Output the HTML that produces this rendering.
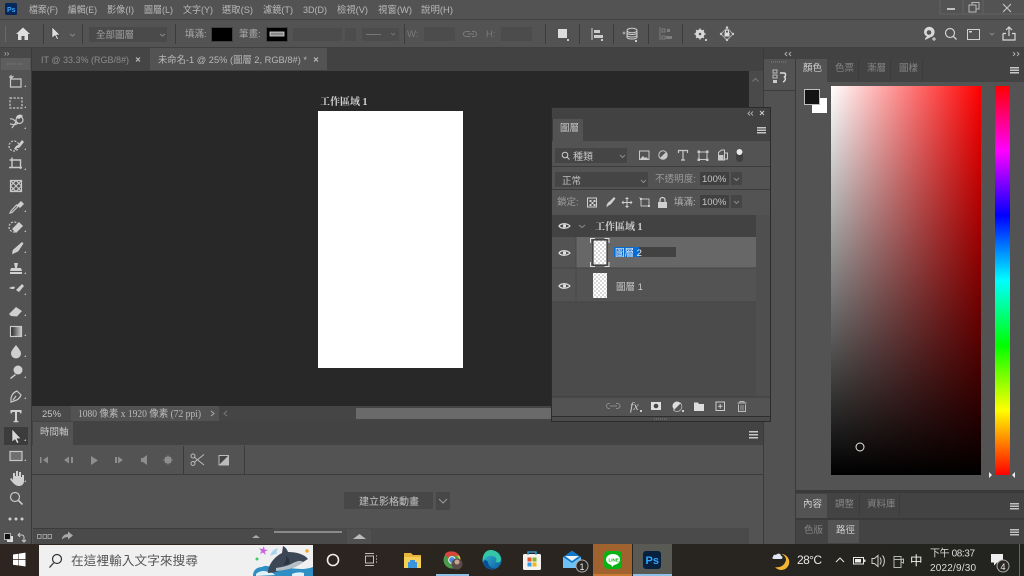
<!DOCTYPE html>
<html><head><meta charset="utf-8"><style>
html,body{margin:0;padding:0;background:#535353;width:1024px;height:576px;overflow:hidden}
svg{display:block;position:absolute;left:0;top:0;filter:blur(.35px)}
text{font-family:"Liberation Sans","Noto Sans CJK TC",sans-serif;font-size:9.5px;fill:#b8b8b8}
.d{fill:#868686}
.st{fill:none;stroke:#c8c8c8;stroke-width:1.2}
.sd{fill:none;stroke:#8a8a8a;stroke-width:1}
</style></head><body>
<svg width="1024" height="576" viewBox="0 0 1024 576" xmlns="http://www.w3.org/2000/svg">
<defs>
<linearGradient id="wr" x1="0" x2="1" y1="0" y2="0"><stop offset="0" stop-color="#fff"/><stop offset="1" stop-color="#f00"/></linearGradient>
<linearGradient id="tb" x1="0" x2="0" y1="0" y2="1"><stop offset="0" stop-color="#000" stop-opacity="0"/><stop offset="1" stop-color="#000"/></linearGradient>
<linearGradient id="hue" x1="0" x2="0" y1="0" y2="1"><stop offset="0" stop-color="#f00"/><stop offset=".1667" stop-color="#f0f"/><stop offset=".3333" stop-color="#00f"/><stop offset=".5" stop-color="#0ff"/><stop offset=".6667" stop-color="#0f0"/><stop offset=".8333" stop-color="#ff0"/><stop offset="1" stop-color="#f00"/></linearGradient>
<linearGradient id="grad" x1="0" x2="1" y1="0" y2="0"><stop offset="0" stop-color="#222"/><stop offset="1" stop-color="#ccc"/></linearGradient>
<linearGradient id="edge" x1="0" x2="1" y1="0" y2="1"><stop offset="0" stop-color="#35c1d0"/><stop offset="1" stop-color="#0c59a4"/></linearGradient>
<linearGradient id="taskbg" x1="0" x2="1" y1="0" y2="0"><stop offset="0" stop-color="#2e2420"/><stop offset=".6" stop-color="#2a2520"/><stop offset="1" stop-color="#22241f"/></linearGradient>
<pattern id="chk" width="4" height="4" patternUnits="userSpaceOnUse"><rect width="4" height="4" fill="#fff"/><rect width="2" height="2" fill="#d8d8d8"/><rect x="2" y="2" width="2" height="2" fill="#d8d8d8"/></pattern>
</defs>

<!-- base -->
<rect width="1024" height="576" fill="#535353"/>

<!-- menu bar -->
<rect x="5" y="3" width="12" height="12" rx="1.500" fill="#06285c"/>
<text x="7" y="12" style="font-size:7px;font-weight:bold;fill:#3ba4f5">Ps</text>
<text x="29" y="13" textLength="29" lengthAdjust="spacingAndGlyphs">檔案(F)</text>
<text x="68" y="13" textLength="29" lengthAdjust="spacingAndGlyphs">編輯(E)</text>
<text x="107" y="13" textLength="27" lengthAdjust="spacingAndGlyphs">影像(I)</text>
<text x="144" y="13" textLength="29" lengthAdjust="spacingAndGlyphs">圖層(L)</text>
<text x="183" y="13" textLength="30" lengthAdjust="spacingAndGlyphs">文字(Y)</text>
<text x="222" y="13" textLength="31" lengthAdjust="spacingAndGlyphs">選取(S)</text>
<text x="263" y="13" textLength="30" lengthAdjust="spacingAndGlyphs">濾鏡(T)</text>
<text x="303" y="13" textLength="24" lengthAdjust="spacingAndGlyphs">3D(D)</text>
<text x="337" y="13" textLength="31" lengthAdjust="spacingAndGlyphs">檢視(V)</text>
<text x="378" y="13" textLength="34" lengthAdjust="spacingAndGlyphs">視窗(W)</text>
<text x="421" y="13" textLength="32" lengthAdjust="spacingAndGlyphs">說明(H)</text>
<!-- window controls -->
<path d="M940 0V14H1024M963 0V14M983 0V14" stroke="#636363" fill="none"/>
<rect x="947" y="8" width="8" height="2" fill="#c0c0c0"/>
<path d="M969 5h7v7h-7zM972 5V2.500h7v6.500h-3" fill="none" stroke="#b8b8b8"/>
<path d="M1003 4l8 8M1011 4l-8 8" stroke="#c0c0c0" stroke-width="1.200"/>

<!-- options bar -->
<rect x="0" y="19" width="1024" height="1" fill="#424242"/>
<rect x="0" y="47" width="1024" height="1" fill="#404040"/>
<rect x="5" y="26" width="1" height="16" fill="#6a6a6a"/>
<path d="M16 34l7-6.500 7 6.500h-2v6h-3.500v-4h-3v4H18v-6z" fill="#dedede"/>
<rect x="43" y="24" width="1" height="20" fill="#3c3c3c"/>
<path d="M52 27v11l3-2.500 2 4 1.500-.7-2-3.800h3.500z" fill="#ddd" stroke="#333" stroke-width=".5"/>
<path d="M70 34l2.500 2 2.500-2" class="sd"/>
<rect x="82" y="24" width="1" height="20" fill="#3c3c3c"/>
<rect x="89" y="27" width="78" height="15" fill="#4a4a4a"/>
<text x="96" y="38" style="fill:#a0a0a0">全部圖層</text>
<path d="M160 34l2.500 2 2.500-2" class="sd"/>
<rect x="175" y="24" width="1" height="20" fill="#3c3c3c"/>
<text x="185" y="37" style="fill:#a8a8a8">填滿:</text>
<rect x="211.500" y="27.500" width="21" height="14" fill="#000" stroke="#404040"/>
<text x="239" y="37" style="fill:#a8a8a8">筆畫:</text>
<rect x="266.500" y="27.500" width="21" height="14" fill="#000" stroke="#404040"/>
<rect x="270" y="32" width="14" height="4" fill="#888" stroke="#ddd" stroke-width=".8"/>
<rect x="293" y="28" width="49" height="13" fill="#4c4c4c"/>
<rect x="345" y="28" width="11" height="13" fill="#4c4c4c"/>
<rect x="362" y="28" width="37" height="13" fill="#4c4c4c"/>
<rect x="366" y="34" width="15" height="1" fill="#767676"/>
<path d="M391 33l2 2 2-2" stroke="#707070" fill="none"/>
<rect x="404" y="24" width="1" height="20" fill="#3c3c3c"/>
<text x="407" y="37" style="fill:#7a7a7a">W:</text>
<rect x="424" y="27" width="31" height="14" fill="#4c4c4c"/>
<path d="M466 31.500h4M470 36.500h-4M468 34h6M472 31.500h2a2.500 2.500 0 010 5h-2M466 31.500a2.500 2.500 0 000 5" stroke="#7a7a7a" fill="none"/>
<text x="486" y="37" style="fill:#7a7a7a">H:</text>
<rect x="501" y="27" width="31" height="14" fill="#4c4c4c"/>
<rect x="545" y="24" width="1" height="20" fill="#3c3c3c"/>
<rect x="558" y="29" width="9" height="9" fill="#ddd"/><rect x="567" y="39" width="2" height="2" fill="#ccc"/>
<rect x="579" y="24" width="1" height="20" fill="#3c3c3c"/>
<path d="M592 28v12" stroke="#ccc"/><rect x="594" y="30" width="6" height="3" fill="#ccc"/><rect x="594" y="35" width="9" height="3" fill="#ccc"/><rect x="601" y="39" width="2" height="2" fill="#ccc"/>
<rect x="613" y="24" width="1" height="20" fill="#3c3c3c"/>
<ellipse cx="632" cy="30.500" rx="5" ry="2.300" fill="none" stroke="#ccc"/><path d="M627 33c1 2 9 2 10 0M627 35.500c1 2 9 2 10 0M627 30.500v7c1 2 9 2 10 0v-7" fill="none" stroke="#ccc"/><path d="M624 31.500v3M622.500 33h3" stroke="#ccc" stroke-width=".8"/><rect x="635" y="40" width="2" height="2" fill="#ccc"/>
<rect x="648" y="24" width="1" height="20" fill="#3c3c3c"/>
<path d="M660 27v13" stroke="#7d7d7d"/><rect x="662" y="29" width="3" height="3" fill="none" stroke="#7d7d7d"/><rect x="667" y="29" width="3" height="3" fill="#7d7d7d"/><rect x="662" y="36" width="3" height="3" fill="none" stroke="#7d7d7d"/><rect x="666" y="36" width="6" height="3" fill="#7d7d7d"/>
<rect x="682" y="24" width="1" height="20" fill="#3c3c3c"/>
<circle cx="700" cy="34" r="3.300" fill="none" stroke="#d8d8d8" stroke-width="2.400"/><path d="M700 28.500v11M694.500 34h11M696.200 30.200l7.600 7.600M703.800 30.200l-7.600 7.600" stroke="#d8d8d8" stroke-width="1.500"/><circle cx="700" cy="34" r="1.300" fill="#535353"/><rect x="705" y="39" width="2" height="2" fill="#ccc"/>
<path d="M721 34l6-6 6 6-6 6z" fill="none" stroke="#aaa"/><rect x="724.500" y="32.500" width="5" height="4" fill="#ddd"/><path d="M725.500 32.500v-1a1.500 1.500 0 013 0v1" stroke="#ddd" fill="none"/><circle cx="727" cy="27.500" r="1.200" fill="#ccc"/><circle cx="721" cy="34" r="1.200" fill="#ccc"/><circle cx="733" cy="34" r="1.200" fill="#ccc"/><circle cx="727" cy="40" r="1.200" fill="#ccc"/>
<!-- right options icons -->
<path d="M925 40c0-2 1-3 2-3.500-2-1-3-2.500-3-4.500a5.300 5.300 0 0110.600 0c0 2-1 3.500-2 4.300" fill="#d8d8d8"/><circle cx="929" cy="32.500" r="2.300" fill="#535353"/><path d="M934 37v4M932 39h4" stroke="#dedede"/>
<circle cx="950" cy="33" r="4.500" fill="none" stroke="#d0d0d0" stroke-width="1.200"/><path d="M953.500 36.500l3 3" stroke="#d0d0d0" stroke-width="1.300"/>
<rect x="967.500" y="29.500" width="12" height="10" fill="none" stroke="#d0d0d0"/><rect x="969" y="31" width="3" height="1.500" fill="#d0d0d0"/>
<path d="M990 33l2 2 2-2" class="sd"/>
<path d="M1003 33.500v6.500h12v-6.500h-3M1006 33.500h-3M1009 36v-9M1006 30l3-3 3 3" fill="none" stroke="#d8d8d8" stroke-width="1.200"/>

<!-- tab row -->
<rect x="32" y="48" width="731" height="23" fill="#424242"/>
<rect x="32" y="48" width="118" height="22" fill="#454545"/>
<rect x="150" y="48" width="177" height="22" fill="#535353"/>
<text x="41" y="63" textLength="88" lengthAdjust="spacingAndGlyphs" style="fill:#8c8c8c">IT @ 33.3% (RGB/8#)</text>
<path d="M136 57.500l4 4M140 57.500l-4 4" stroke="#bdbdbd" stroke-width="1.100"/>
<text x="158" y="63" textLength="149" lengthAdjust="spacingAndGlyphs">未命名-1 @ 25% (圖層 2, RGB/8#) *</text>
<path d="M314 57.500l4 4M318 57.500l-4 4" stroke="#bdbdbd" stroke-width="1.100"/>

<!-- canvas -->
<rect x="32" y="71" width="717" height="335" fill="#282828"/>
<rect x="749" y="71" width="14" height="335" fill="#4a4a4a"/>
<path d="M752.500 81.500l3-3 3 3" stroke="#7a7a7a" fill="none"/>
<rect x="318" y="111" width="145" height="257" fill="#fff"/>
<text x="320" y="105" style="font-family:'Liberation Serif','Noto Serif CJK SC',serif;font-weight:bold;font-size:10px;fill:#d4d4d4">工作區域 1</text>

<!-- toolbar -->
<rect x="0" y="48" width="31" height="496" fill="#535353"/>
<rect x="31" y="48" width="1" height="496" fill="#3a3a3a"/>
<rect x="0" y="48" width="31" height="10" fill="#484848"/>
<text x="4" y="56" style="font-size:8px;fill:#bbb">››</text>
<rect x="1" y="58" width="29" height="12" fill="#5e5e5e"/>
<path d="M7 64h16" stroke="#6e6e6e" stroke-dasharray="1 1" stroke-width="2"/>
<!-- tools -->
<g fill="none" stroke="#c9c9c9" stroke-width="1.200">
<path d="M11 75v3M9 77h3M10.500 79h10.500v8H10.500zM10.500 79l3-3"/>
<rect x="10" y="98" width="12" height="10" stroke-dasharray="2.200 1.400"/>
<path d="M10 119c3-1 5 2 8 5M10 124c3 0 5 2 8-1M12 128l4-6"/>
<circle cx="19.500" cy="120" r="3.500"/>
<circle cx="14" cy="146" r="5" stroke-dasharray="2 1.400"/>
<path d="M9.500 160h11v9M12 157.500v10h10M9 167.500h3" stroke-width="1.400"/>
<path d="M10.500 180.500h11v11h-11zM10.500 180.500l11 11M21.500 180.500l-11 11M16 180.500l5.500 5.500-5.500 5.500-5.500-5.500z"/>
<path d="M11 211l-1 2 2-.5 6-6-1.500-1.500z"/>
<circle cx="14" cy="227" r="5" stroke-dasharray="2 1.400"/>
</g>
<g fill="#cfcfcf">
<path d="M23 116a4 4 0 00-7 2l3 1z"/>
<path d="M22 140l2 2-4 5-3 1-1 2-2-1 2-3 2-1z"/>
<path d="M17 205l4-4 3 3-4 4z"/>
<path d="M12 229l7-7 4 4-7 7z"/>
<path d="M22 242l1.500 1.500-5 7.500c-1.500 1.500-4 1.500-6 3.500-.5-2.500 0-5 2-6z"/>
<path d="M14 263h4l-1 5h4l1 3H10l1-3h4z"/><rect x="10" y="272" width="12" height="2"/>
<path d="M22 284l2 2-5 6-3-2zM9 288c2-1 4-2 6-1l-1 2c-2 0-3 0-5-1z"/>
<path d="M16 307l6 4-5 5.500-6-.5-2-2z"/>
<path d="M16 345c3 4 5 6 5 8.500a5 5 0 01-10 0c0-2.500 2-4.500 5-8.500z"/>
<circle cx="18" cy="370" r="4.500"/><path d="M10 378l5-4 1 1-5 4z"/>
<path d="M10.500 410h11v3.500h-1l-1-1.500h-2.500v8.500l1.500.7v1h-5v-1l1.500-.7V412H12.500l-1 1.500h-1z"/>
<path d="M13 480v-7h2v3h1v-5h2v5h1v-4h2v5h1v-2h2v6c0 3-2 5-5 5-4 0-7-4-9-7l1.500-1z"/>
<circle cx="10" cy="519" r="1.500"/><circle cx="16" cy="519" r="1.500"/><circle cx="22" cy="519" r="1.500"/>
</g>
<rect x="4" y="427" width="24" height="18" fill="#3c3c3c"/>
<path d="M12 429v13l3-2.500 2 4 2-1-2-3.800h4z" fill="#d5d5d5" stroke="#222" stroke-width=".5"/>
<g fill="none" stroke="#c9c9c9" stroke-width="1.200">
<rect x="10.500" y="326.500" width="11" height="10" fill="url(#grad)"/>
<rect x="10" y="451.500" width="12" height="9" fill="#6f6f6f"/>
<path d="M11 398c1-4 3-6 6-7l4 4c-1 3-3 5-7 6l-3 1zM16 396l-3 4"/>
<circle cx="15" cy="497" r="4.500"/><path d="M18.500 500.500l4 4" stroke-width="1.600"/>
</g>
<g fill="#b8b8b8">
<path d="M26 87v-2l-2 2zM26 108v-2l-2 2zM26 129v-2l-2 2zM26 150v-2l-2 2zM26 170v-2l-2 2zM26 212v-2l-2 2zM26 232v-2l-2 2zM26 253v-2l-2 2zM26 274v-2l-2 2zM26 295v-2l-2 2zM26 316v-2l-2 2zM26 336v-2l-2 2zM26 357v-2l-2 2zM26 378v-2l-2 2zM26 399v-2l-2 2zM26 441v-2l-2 2zM26 461v-2l-2 2zM26 482v-2l-2 2z"/>
</g>
<rect x="7" y="536" width="6" height="6" fill="#ddd"/><rect x="4.500" y="533.500" width="6" height="6" fill="#111" stroke="#ccc" stroke-width=".8"/>
<path d="M18 535h4c1 0 2 1 2 2v4M22 540l2 2 2-2M20 533l-2 2 2 2" fill="none" stroke="#ccc"/>

<!-- status bar -->
<rect x="32" y="406" width="731" height="15" fill="#454545"/>
<rect x="32" y="406" width="39" height="15" fill="#4a4a4a"/>
<rect x="71" y="406" width="148" height="15" fill="#525252"/>
<text x="42" y="417" style="fill:#c4c4c4">25%</text>
<text x="78" y="417" textLength="123" lengthAdjust="spacingAndGlyphs" style="font-family:'Liberation Serif','Noto Sans CJK TC',serif;font-size:10px;fill:#bbb">1080 像素 x 1920 像素 (72 ppi)</text>
<path d="M211 411l3 2.500-3 2.500" stroke="#aaa" fill="none"/>
<path d="M227 411l-3 2.500 3 2.500" stroke="#777" fill="none"/>
<rect x="356" y="408" width="198" height="11" fill="#6a6a6a"/>

<!-- timeline -->
<rect x="32" y="421" width="731" height="24" fill="#434343"/>
<rect x="33" y="422" width="40" height="23" fill="#535353"/>
<text x="40" y="435" style="fill:#c8c8c8">時間軸</text>
<g fill="#c8c8c8"><rect x="749" y="431" width="9" height="1.500"/><rect x="749" y="434" width="9" height="1.500"/><rect x="749" y="437" width="9" height="1.500"/></g>
<rect x="32" y="474" width="731" height="1" fill="#3c3c3c"/>
<rect x="183" y="446" width="1" height="28" fill="#3a3a3a"/>
<rect x="244" y="446" width="1" height="28" fill="#3a3a3a"/>
<g fill="#8e8e8e">
<rect x="40" y="457" width="1.500" height="6"/><path d="M48 456.500v7l-5-3.500z"/>
<path d="M69 456.500v7l-5-3.500z"/><rect x="71" y="457" width="2" height="6"/>
<path d="M91 456v9l7-4.500z"/>
<rect x="115" y="457" width="2" height="6"/><path d="M118 456.500v7l5-3.500z"/>
<path d="M141 458h2l4-3v10l-4-3h-2z"/>
</g>
<circle cx="168" cy="460" r="2.500" fill="none" stroke="#8e8e8e" stroke-width="2"/><path d="M168 455.500v9M163.500 460h9M165 457l6 6M171 457l-6 6" stroke="#8e8e8e" stroke-width="1.200"/>
<path d="M204 454.500l-10 8M204 465l-10-8" stroke="#b8b8b8" stroke-width="1.100" fill="none"/><circle cx="193" cy="456" r="2" fill="none" stroke="#b8b8b8"/><circle cx="193" cy="463.500" r="2" fill="none" stroke="#b8b8b8"/>
<rect x="219" y="455.500" width="9.500" height="9.500" fill="#444" stroke="#bbb"/><path d="M219 465l9.500-9.500v9.500z" fill="#bbb"/>
<rect x="344" y="492" width="89" height="17" rx="1" fill="#474747"/>
<text x="359" y="505" style="fill:#c4c4c4;font-size:10px">建立影格動畫</text>
<rect x="436" y="492" width="14" height="18" rx="1" fill="#474747"/>
<path d="M439 499l4 4 4-4" stroke="#9a9a9a" fill="none"/>
<rect x="33" y="528" width="716" height="16" fill="#4a4a4a"/>
<rect x="33" y="528" width="240" height="1" fill="#3c3c3c"/>
<rect x="347" y="529" width="24" height="15" fill="#505050"/>
<g fill="none" stroke="#9a9a9a"><rect x="37.500" y="534.500" width="3.500" height="4"/><rect x="43" y="534.500" width="3.500" height="4"/><rect x="48" y="534.500" width="3.500" height="4"/></g>
<path d="M62 539c0-3 3-5 6-5v-2.500l5 4-5 4v-2.500c-2 0-4 .5-6 2.500z" fill="#aaa"/>
<path d="M252 538h8l-4-3z" fill="#aaa"/>
<rect x="274" y="531" width="68" height="2" fill="#8a8a8a"/>
<path d="M353 539h13l-6.500-5z" fill="#bbb"/>

<!-- right dock -->
<rect x="763" y="48" width="261" height="11" fill="#424242"/>
<rect x="763" y="48" width="1" height="496" fill="#3a3a3a"/>
<path d="M787 52l-2 2 2 2M791 52l-2 2 2 2" stroke="#aaa" fill="none"/>
<path d="M1013 52l2 2-2 2M1017 52l2 2-2 2" stroke="#aaa" fill="none"/>
<rect x="764" y="59" width="31" height="31" fill="#535353"/>
<rect x="764" y="90" width="31" height="1" fill="#3c3c3c"/>
<rect x="764" y="91" width="31" height="453" fill="#525252"/>
<path d="M771 62h16" stroke="#6a6a6a" stroke-width="2" stroke-dasharray="1 1"/>
<rect x="773" y="70" width="4" height="3" fill="none" stroke="#bbb"/><rect x="773" y="75" width="4" height="3" fill="none" stroke="#bbb"/><rect x="773" y="80" width="4" height="3" fill="#ccc"/>
<path d="M780 73h4c2 0 2 3 .5 4 1.500 1 1 4-1.500 5" fill="none" stroke="#ddd" stroke-width="1.400"/>
<rect x="795" y="59" width="1" height="485" fill="#3a3a3a"/>
<rect x="796" y="59" width="228" height="23" fill="#434343"/>
<rect x="796" y="59" width="31" height="23" fill="#535353"/>
<text x="803" y="71" style="fill:#d2d2d2">顏色</text><text x="835" y="71" class="d">色票</text><text x="867" y="71" class="d">漸層</text><text x="899" y="71" class="d">圖樣</text>
<path d="M858.500 59v22M890.500 59v22M922.500 59v22" stroke="#3c3c3c"/>
<g fill="#c8c8c8"><rect x="1010" y="67" width="9" height="1.500"/><rect x="1010" y="69.500" width="9" height="1.500"/><rect x="1010" y="72" width="9" height="1.500"/></g>
<!-- color -->
<rect x="812" y="98" width="15" height="15" fill="#fff"/>
<rect x="804.500" y="89.500" width="15" height="15" fill="#141414" stroke="#bdbdbd"/>
<rect x="831" y="86" width="150" height="389" fill="url(#wr)"/>
<rect x="831" y="86" width="150" height="389" fill="url(#tb)"/>
<circle cx="860" cy="447" r="4" fill="none" stroke="#e8e8e8"/>
<rect x="995" y="86" width="15" height="389" fill="url(#hue)"/>
<path d="M989 472v6l3-3zM1015 472v6l-3-3z" fill="#eee"/>
<!-- lower panels -->
<rect x="796" y="490" width="228" height="3" fill="#3a3a3a"/>
<rect x="796" y="493" width="228" height="25" fill="#434343"/>
<rect x="796" y="494" width="31" height="24" fill="#535353"/>
<text x="803" y="507" style="fill:#d0d0d0">內容</text><text x="835" y="507" class="d">調整</text><text x="867" y="507" class="d">資料庫</text>
<path d="M859.500 494v23M899.500 494v23" stroke="#3c3c3c"/>
<rect x="796" y="518" width="228" height="2" fill="#3a3a3a"/>
<rect x="796" y="520" width="228" height="24" fill="#434343"/>
<rect x="828" y="520" width="31" height="23" fill="#535353"/>
<text x="804" y="533" class="d">色版</text><text x="836" y="533" style="fill:#d0d0d0">路徑</text>
<g fill="#c0c0c0"><rect x="1010" y="503" width="9" height="1.500"/><rect x="1010" y="505.500" width="9" height="1.500"/><rect x="1010" y="508" width="9" height="1.500"/><rect x="1010" y="529" width="9" height="1.500"/><rect x="1010" y="531.500" width="9" height="1.500"/><rect x="1010" y="534" width="9" height="1.500"/></g>

<!-- layers panel -->
<rect x="551" y="107" width="220" height="315" fill="#2c2c2c"/>
<rect x="552" y="108" width="218" height="313" fill="#4b4b4b"/>
<rect x="552" y="108" width="218" height="10" fill="#424242"/>
<rect x="552" y="118" width="218" height="23" fill="#424242"/>
<rect x="552" y="118" width="1" height="23" fill="#3a3a3a"/>
<rect x="553" y="119" width="30" height="22" fill="#535353"/>
<text x="560" y="131" style="fill:#c8c8c8">圖層</text>
<path d="M750 111.500l-2 2 2 2M753 111.500l-2 2 2 2" stroke="#aaa" fill="none"/>
<path d="M760 111l4 4M764 111l-4 4" stroke="#ccc"/>
<g fill="#c4c4c4"><rect x="757" y="127" width="9" height="1.500"/><rect x="757" y="129.500" width="9" height="1.500"/><rect x="757" y="132" width="9" height="1.500"/></g>
<rect x="552" y="141" width="218" height="25" fill="#535353"/>
<rect x="552" y="166" width="218" height="1" fill="#3c3c3c"/>
<rect x="555" y="148" width="72" height="15" fill="#454545"/>
<circle cx="565" cy="155" r="2.800" fill="none" stroke="#ccc"/><path d="M567 157l2.500 2.500" stroke="#ccc"/>
<text x="573" y="160" style="fill:#c4c4c4;font-size:10px">種類</text>
<path d="M620 155l2.500 2.500 2.500-2.500" class="sd"/>
<rect x="639.500" y="151" width="9.500" height="8.500" fill="none" stroke="#c8c8c8"/><path d="M640 159l3-3 2 2 1-1 2.500 2z" fill="#c8c8c8"/>
<circle cx="663" cy="155" r="4.200" fill="none" stroke="#c8c8c8"/><path d="M666 152l-6 6a4.200 4.200 0 006-6z" fill="#c8c8c8"/>
<path d="M678.500 153v-2.500h9v2.500M683 150.500v9M681 160h4" fill="none" stroke="#c8c8c8" stroke-width="1.200"/>
<path d="M699 152h8.500M699 159.500h8.500M699 152v7.500M707 152v7.500" stroke="#c8c8c8" fill="none"/><g fill="#c8c8c8"><rect x="697.500" y="150.500" width="2.500" height="2.500"/><rect x="706" y="150.500" width="2.500" height="2.500"/><rect x="697.500" y="158.500" width="2.500" height="2.500"/><rect x="706" y="158.500" width="2.500" height="2.500"/></g>
<path d="M718.500 152.500l3-2.500h3v10h-6zM725 153h2.500v6H724" fill="none" stroke="#c8c8c8"/><rect x="719" y="155" width="4.500" height="4.500" fill="#c8c8c8"/>
<rect x="736" y="149" width="7" height="13" rx="3.500" fill="#3f3f3f"/><circle cx="739.500" cy="152" r="3" fill="#e8e8e8"/>
<rect x="552" y="167" width="218" height="23" fill="#535353"/>
<rect x="552" y="189" width="218" height="1" fill="#3c3c3c"/>
<rect x="555" y="172" width="93" height="15" fill="#454545"/>
<text x="562" y="184" style="fill:#c0c0c0">正常</text>
<path d="M641 180l2.500 2.500 2.500-2.500" class="sd"/>
<text x="655" y="182" textLength="41" style="fill:#9c9c9c">不透明度:</text>
<rect x="700" y="172" width="29" height="13" fill="#404040"/><rect x="731" y="172" width="11" height="13" fill="#454545"/>
<text x="702" y="182" style="fill:#c4c4c4">100%</text>
<path d="M734 178l2.500 2.500 2.500-2.500" class="sd"/>
<rect x="552" y="190" width="218" height="25" fill="#535353"/>
<text x="557" y="205" style="fill:#9c9c9c">鎖定:</text>
<g fill="#d0d0d0"><path d="M587.500 198h9v9h-9z" fill="none" stroke="#d0d0d0"/><rect x="589.500" y="200" width="2" height="2"/><rect x="593.500" y="200" width="2" height="2"/><rect x="591.500" y="202" width="2" height="2"/><rect x="589.500" y="204" width="2" height="2"/><rect x="593.500" y="204" width="2" height="2"/>
<path d="M614 197l1.500 1.500-4 5c-1 1.500-3 1.500-5 4 0-3 1-5 3-6z"/>
<path d="M627 197l2 2h-1.500v3h3v-1.500l2 2-2 2v-1.500h-3v3h1.500l-2 2-2-2h1.500v-3h-3v1.500l-2-2 2-2v1.500h3v-3H625z"/>
<rect x="658" y="202" width="9" height="6"/><path d="M660 202v-2a2.500 2.500 0 015 0v2" fill="none" stroke="#d0d0d0" stroke-width="1.200"/></g>
<path d="M641 199h8v7h-8zM641 199l-1.500-1.500" fill="none" stroke="#c0c0c0"/><rect x="640" y="198" width="2" height="2" fill="#ccc"/><rect x="648" y="205" width="2" height="2" fill="#ccc"/>
<text x="674" y="205" style="fill:#b0b0b0">填滿:</text>
<rect x="700" y="195" width="29" height="13" fill="#404040"/><rect x="731" y="195" width="11" height="13" fill="#454545"/>
<text x="702" y="205" style="fill:#c4c4c4">100%</text>
<path d="M734 201l2.500 2.500 2.500-2.500" class="sd"/>
<!-- rows -->
<rect x="552" y="215" width="204" height="22" fill="#424242"/>
<rect x="756" y="215" width="14" height="182" fill="#4f4f4f"/>
<path d="M559 226c2-3 8-3 11 0-3 3-9 3-11 0z" fill="none" stroke="#ddd" stroke-width="1.200"/><circle cx="564.500" cy="226" r="1.600" fill="#ddd"/>
<path d="M579 225l3 2.500 3-2.500" stroke="#8c8c8c" fill="none"/>
<text x="595" y="230" style="font-family:'Liberation Serif','Noto Serif CJK SC',serif;font-weight:bold;font-size:10px;fill:#d2d2d2">工作區域 1</text>
<rect x="552" y="237" width="24" height="31" fill="#535353"/>
<rect x="576" y="237" width="180" height="31" fill="#676767"/>
<rect x="552" y="268" width="24" height="34" fill="#535353"/>
<rect x="576" y="268" width="180" height="34" fill="#535353"/>
<rect x="552" y="267.500" width="204" height="1" fill="#444"/>
<rect x="552" y="301.500" width="204" height="1" fill="#444"/>
<path d="M576 237v65" stroke="#4a4a4a"/>
<path d="M559 253c2-3 8-3 11 0-3 3-9 3-11 0z" fill="none" stroke="#e0e0e0" stroke-width="1.200"/><circle cx="564.500" cy="253" r="1.600" fill="#e0e0e0"/>
<path d="M559 286c2-3 8-3 11 0-3 3-9 3-11 0z" fill="none" stroke="#e0e0e0" stroke-width="1.200"/><circle cx="564.500" cy="286" r="1.600" fill="#e0e0e0"/>
<rect x="593" y="240" width="14" height="25" fill="url(#chk)" stroke="#222"/>
<path d="M590.500 243v-4.500h4.500M604.500 238.500h4.500v4.500M609 262v4.500h-4.500M595 266.500h-4.500V262" fill="none" stroke="#ddd"/>
<rect x="593" y="273" width="14" height="25" fill="url(#chk)"/>
<rect x="638" y="247" width="38" height="10" fill="#424242"/>
<rect x="614" y="247" width="25" height="10" fill="#0a6ccf"/>
<text x="615" y="256" style="fill:#e8f0fa">圖層 2</text>
<text x="616" y="290" style="fill:#c8c8c8">圖層 1</text>
<!-- bottom bar -->
<rect x="552" y="397" width="218" height="19" fill="#535353"/>
<rect x="552" y="396.500" width="218" height="1" fill="#3c3c3c"/>
<rect x="552" y="416" width="218" height="1" fill="#2e2e2e"/>
<path d="M610 406h7M610 403.500h-1a2.500 2.500 0 000 5h1M616 403.500h1.500a2.500 2.500 0 010 5H616" fill="none" stroke="#8a8a8a"/>
<text x="630" y="410" style="font-family:'Liberation Serif',serif;font-style:italic;font-size:12px;fill:#cfcfcf">fx</text>
<rect x="640" y="410" width="2" height="2" fill="#ccc"/>
<rect x="651" y="402" width="10" height="8" fill="#ddd"/><circle cx="656" cy="406" r="2.300" fill="#444"/>
<circle cx="677" cy="406" r="4.500" fill="#ddd"/><path d="M680.500 403l-7 7a4.500 4.500 0 007-7z" fill="#555" stroke="#ddd" stroke-width=".6"/><rect x="682" y="410" width="2" height="2" fill="#ccc"/>
<path d="M694 402.500h4l1 1.500h5v7h-10z" fill="#ddd"/>
<rect x="716" y="402" width="8.500" height="8.500" fill="none" stroke="#ccc"/><path d="M720.200 404v4.500M718 406.200h4.500" stroke="#ccc"/>
<path d="M737.500 403h9M740 403v-1.500h4v1.500M738.500 404.500v7h7v-7" fill="none" stroke="#bbb"/><path d="M741 405v5.500M743 405v5.500" stroke="#bbb" stroke-width=".7"/>
<path d="M654 419h14" stroke="#666" stroke-width="2" stroke-dasharray="1 1"/>

<!-- taskbar -->
<rect x="0" y="544" width="1024" height="32" fill="url(#taskbg)"/>
<g fill="#fff"><path d="M13 554.500l5.500-.8v5.500H13zM19 553.600l6.500-1v6.600H19zM13 560h5.500v5.500l-5.500-.8zM19 560h6.500v6.500l-6.500-1z"/></g>
<rect x="39" y="545" width="274" height="31" fill="#f0f0f0"/>
<circle cx="57" cy="559" r="4.500" fill="none" stroke="#333" stroke-width="1.200"/><path d="M53.500 563l-4 4.500" stroke="#333" stroke-width="1.300"/>
<text x="71" y="565" textLength="127" lengthAdjust="spacingAndGlyphs" style="font-size:12.500px;fill:#555">在這裡輸入文字來搜尋</text>
<!-- whale -->
<path d="M253 576c0-6 4-9 9-9 3-2 6-1 9 0l30 2c5 0 9-1 12-2v9z" fill="#2f8fc4"/>
<path d="M256 574c3-3 8-4 12-2 3 0 5 1 7 3l-19 1zM292 574c4-2 9-2 12-1v3h-12z" fill="#dff0f9"/>
<path d="M268 573c0-8 6-16 14-20l1-7c2 1 4 3 5 6 8 0 16 2 20 7-2 1-3 2-5 3-5 4-11 7-19 8-6 1-11 3-16 3z" fill="#3c4654"/>
<path d="M276 568c6-1 12-2 17-5 4-2 8-3 10-1-5 4-11 7-19 8-3 .5-6 1-8 1z" fill="#b4bfc8"/>
<path d="M283 565c3-3 4-6 3-9 3 2 4 5 3 8z" fill="#2a323d"/>
<path d="M270 556c1-4 4-7 8-8-1 3-2 4-1 6-2 0-5 1-7 2z" fill="#a9d6ee"/>
<path d="M264 546l-1.500 3-3.500-.5 2.500 2.500-1.500 3 3-1.500 2.500 2.500-.5-3.500 3-1.500-3.500-.5z" fill="#c665e0"/>
<circle cx="257" cy="559" r="1.500" fill="#41c96a"/>
<circle cx="307" cy="551" r="1.700" fill="#f0a724"/>
<!-- cortana, task view -->
<circle cx="333" cy="560" r="5.500" fill="none" stroke="#eee" stroke-width="1.600"/>
<path d="M365 553.500h9M365 565.500h9" stroke="#bdbdbd"/><rect x="365.500" y="556" width="8" height="7" fill="none" stroke="#bdbdbd"/><path d="M376.500 555v9" stroke="#8a8a8a" stroke-dasharray="2 1"/>
<!-- explorer -->
<path d="M404 553h7l2 2h8v3h-17z" fill="#e8b53e"/><rect x="404" y="557" width="17" height="11" fill="#f5cf56"/><rect x="408" y="562" width="9" height="6" fill="#3a96d8"/><rect x="410" y="560" width="5" height="2" fill="#3a96d8"/>
<!-- chrome -->
<circle cx="452" cy="560" r="8.500" fill="#4d9a4d"/><path d="M452 551.500a8.500 8.500 0 017.400 4.300H452a4.200 4.200 0 00-3.800 2.400l-3.500-4a8.500 8.500 0 017.300-2.700z" fill="#d8463a"/><path d="M459.400 555.800a8.500 8.500 0 01-6.500 12.700l3-5a4 4 0 000-7.700z" fill="#f0c13a"/><circle cx="452" cy="560" r="3.400" fill="#4a88e0" stroke="#eee"/>
<circle cx="457" cy="564" r="5.500" fill="#5b4a4a"/><circle cx="457" cy="562" r="2.500" fill="#c5a592"/>
<rect x="436" y="574" width="33" height="2" fill="#8fc0e8"/>
<!-- edge -->
<circle cx="492" cy="560" r="9.500" fill="url(#edge)"/><path d="M483 562c1-5 7-8 12-5 2 1 2 4 0 5l3 .5c2 0 3-2 3-3-.5-6-6-9.500-10-9.500-5 0-9 4-8 12z" fill="#33c7a8"/><path d="M488 562c0 4 4 7 8 6-6 3-13-1-13-6 1-2 3-3 5 0z" fill="#0b4f96"/>
<!-- store -->
<rect x="523" y="554" width="18" height="16" rx="1.500" fill="#f4f2ee"/><path d="M528 555v-3h8v3" fill="none" stroke="#3aa8e0" stroke-width="1.300"/>
<rect x="527.500" y="557.500" width="4" height="4" fill="#e8502a"/><rect x="532.500" y="557.500" width="4" height="4" fill="#7db82a"/><rect x="527.500" y="562.500" width="4" height="4" fill="#2e9fe8"/><rect x="532.500" y="562.500" width="4" height="4" fill="#f3b81a"/>
<!-- mail -->
<path d="M563 557l9-6.500 9 6.500v11h-18z" fill="#1478c8"/><path d="M563 557l9 6 9-6v11h-18z" fill="#6ec2f3"/><path d="M565 556h14l-7 5z" fill="#f0f5fa"/>
<circle cx="582" cy="566" r="6" fill="#2a2825" stroke="#aaa"/><text x="579.500" y="570" style="font-size:9px;fill:#eee">1</text>
<!-- line -->
<rect x="593" y="544" width="39" height="32" fill="#a0622e"/>
<rect x="604" y="551" width="18" height="18" rx="4" fill="#06b312"/>
<ellipse cx="613" cy="559.500" rx="7" ry="5.500" fill="#fff"/><path d="M611 564l1 3 3-3z" fill="#fff"/><text x="608.500" y="561.500" style="font-size:4.500px;font-weight:bold;fill:#06b312">LINE</text>
<rect x="593" y="574" width="39" height="2" fill="#c97a30"/>
<!-- ps -->
<rect x="633" y="544" width="39" height="32" fill="#5a5a55"/>
<rect x="643" y="551" width="18" height="18" rx="3" fill="#06203e"/>
<text x="645.500" y="564" style="font-size:11px;font-weight:bold;fill:#31a8ff">Ps</text>
<rect x="633" y="574" width="39" height="2" fill="#8fc0e8"/>
<!-- tray -->
<path d="M781 554a8 8 0 11-6 13 9 9 0 0011-7c0-3-2-5-5-6z" fill="#f2b632"/>
<path d="M773 557c0-2 2-3 3-2 1-2 5-2 5 1 2 0 2 3 0 3h-7c-2 0-2-2-1-2z" fill="#dfe8f2"/>
<text x="797" y="564" textLength="25" style="font-size:12px;fill:#e6e6e6">28°C</text>
<path d="M836 562l4-4 4 4" fill="none" stroke="#e6e6e6"/>
<rect x="853.500" y="557.500" width="10" height="6.500" fill="none" stroke="#e6e6e6"/><rect x="855" y="559" width="6" height="3.500" fill="#eee"/><rect x="864" y="559.500" width="1.500" height="2.500" fill="#ddd"/>
<path d="M872 558.500h2.500l3.500-3v11l-3.500-3H872zM880 557.500c1.500 2 1.500 5 0 7M882.500 555.500c2.500 3 2.500 8 0 11" fill="none" stroke="#cfcfcf"/>
<path d="M894 556.500h7v11h-7zM894 559.500h7M901 560l2.500-1v4l-2.500-1" fill="none" stroke="#b5b5b5"/>
<text x="910" y="565" style="font-size:12.500px;fill:#f0f0f0">中</text>
<text x="930" y="556.500" textLength="45" style="font-size:10px;fill:#dcdcdc">下午 08:37</text>
<text x="930" y="571" textLength="46" style="font-size:10px;fill:#dcdcdc">2022/9/30</text>
<path d="M991 554h12v8.500h-6l-3 3v-3h-3z" fill="#eee"/>
<circle cx="1003" cy="566" r="6" fill="#2a2825" stroke="#aaa"/><text x="1000.500" y="570" style="font-size:9px;fill:#eee">4</text>
<rect x="1019" y="544" width="1" height="32" fill="#666"/>
</svg>
</body></html>
